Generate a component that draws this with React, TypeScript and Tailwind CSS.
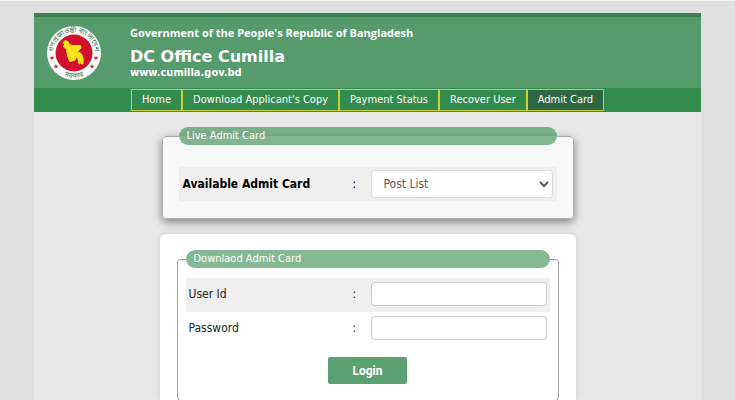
import React from 'react';

const navItems = [
    { label: 'Home', active: false },
    { label: "Download Applicant's Copy", active: false },
    { label: 'Payment Status', active: false },
    { label: 'Recover User', active: false },
    { label: 'Admit Card', active: true },
];

const STAR = 'M0 -2.4 L0.7 -0.8 L2.4 -0.7 L1.1 0.4 L1.5 2 L0 1.1 L-1.5 2 L-1.1 0.4 L-2.4 -0.7 L-0.7 -0.8 Z';

const Seal = () => (
    <svg viewBox="0 0 54 54" className="size-[54px] shrink-0" role="img" aria-label="Government seal">
        <defs>
            <path id="seal-top" d="M7.5 33 A20.5 20.5 0 1 1 46.5 33" />
            <path id="seal-bottom" d="M10 45 A24.5 24.5 0 0 0 44 45" />
        </defs>
        <circle cx="27" cy="27" r="27" fill="#fbfdf8" />
        <circle cx="27" cy="27" r="18.5" fill="#d0102c" />
        <path
            d="M18 14.5 L21 15.5 L22.5 18.5 L25 19.5 L33.5 19.5 L34 22 L31.5 24.5 L29.5 26 L33 26.5 L35 29 L36 33 L36 38 L34.5 38 L33.5 33.5 L33 38 L31.5 37 L31 32 L29 31.5 L28 34 L25.5 35 L22.5 35.5 L21 31 L20 27.5 L19.5 23 L16.5 21 L17.5 18 L16 16.5 Z"
            fill="#fbe21b"
            stroke="#fbe21b"
            strokeLinejoin="round"
        />
        <g fill="#c9283c">
            <path d={STAR} transform="translate(5 32)" />
            <path d={STAR} transform="translate(9 40.5)" />
            <path d={STAR} transform="translate(49 32)" />
            <path d={STAR} transform="translate(45 40.5)" />
        </g>
        <g fill="#3f7553" fontSize="7" fontFamily="'Noto Sans Bengali', 'Noto Sans', sans-serif" textAnchor="middle">
            <text>
                <textPath href="#seal-top" startOffset="50%">গণপ্রজাতন্ত্রী বাংলাদেশ</textPath>
            </text>
            <text>
                <textPath href="#seal-bottom" startOffset="50%">সরকার</textPath>
            </text>
        </g>
    </svg>
);

const Header = () => (
    <header>
        <div className="flex gap-[29px] border-t-4 border-[#38834d] bg-[#559b6b] px-[13px] pt-[9px] pb-2">
            <Seal />
            <div className="font-bold text-white">
                <p className="font-['Open_Sans',sans-serif] text-[11px] leading-[14px]">
                    Government of the People's Republic of Bangladesh
                </p>
                <h1 className="mt-[7px] font-['DejaVu_Sans',sans-serif] text-base leading-5">DC Office Cumilla</h1>
                <p className="text-[11px] leading-3">www.cumilla.gov.bd</p>
            </div>
        </div>
        <nav className="flex justify-center bg-[#338a4d] py-px">
            {navItems.map((item) => (
                <a
                    key={item.label}
                    href="#"
                    className={
                        item.active
                            ? 'border border-[#c8d232] bg-[#2d6640] px-[10px] text-[11px] leading-5 text-white'
                            : 'border border-[#c8d232] px-[10px] text-[11px] leading-5 text-white'
                    }
                >
                    {item.label}
                </a>
            ))}
        </nav>
    </header>
);

const LiveAdmitCard = () => (
    <fieldset className="mx-auto w-full max-w-[412px] rounded border border-[#aaaaaa] bg-[#f8f8f8] px-4 pb-[17px] shadow-[0_3px_8px_rgba(0,0,0,0.45)]">
        <legend className="w-full rounded-full bg-[#338a4d]/60 px-2 text-[11px] leading-[18px] text-white">
            Live Admit Card
        </legend>
        <div className="mt-[22px] flex items-center bg-[#efefef] px-1 py-[3px] text-xs text-black">
            <label htmlFor="post" className="w-[170px] font-bold">
                Available Admit Card
            </label>
            <span className="w-[18px]">:</span>
            <select
                id="post"
                className="h-7 min-w-0 flex-1 rounded-sm border border-[#dcdcdc] bg-white pl-2 text-[#55595c]"
            >
                <option>Post List</option>
            </select>
        </div>
    </fieldset>
);

const fields = [
    { id: 'userId', label: 'User Id', type: 'text' },
    { id: 'password', label: 'Password', type: 'password' },
];

const DownloadAdmitCard = () => (
    <form className="mx-auto mt-[15px] w-full max-w-[416px] rounded-t-md bg-white px-[17px] pt-4 shadow-[0_0_8px_rgba(0,0,0,0.1)]">
        <fieldset className="rounded border border-[#a0a0a0] px-2 pb-4">
            <legend className="w-full rounded-full bg-[#338a4d]/60 px-2 text-[11px] leading-[18px] text-white">
                Downlaod Admit Card
            </legend>
            <div className="mt-[10px]">
                {fields.map((field) => (
                    <div
                        key={field.id}
                        className="flex items-center px-[3px] pt-1 pb-[6px] text-xs text-[#222222] odd:bg-[#efefef]"
                    >
                        <label htmlFor={field.id} className="w-[164px]">
                            {field.label}
                        </label>
                        <span className="w-[18px]">:</span>
                        <input
                            id={field.id}
                            type={field.type}
                            className="h-6 min-w-0 flex-1 rounded-sm border border-[#cccccc] bg-white px-2"
                        />
                    </div>
                ))}
            </div>
            <button
                type="submit"
                className="mx-auto mt-[11px] block h-[27px] rounded-xs bg-[#5ba172] px-6 font-['Roboto',sans-serif] text-xs font-bold text-white"
            >
                Login
            </button>
        </fieldset>
    </form>
);

export default function App() {
    return (
        <div className="min-h-screen border-t border-[#f4f4f4] bg-[#e0e0e0] px-[34px] pt-3 font-['DejaVu_Sans_Condensed','DejaVu_Sans',Verdana,sans-serif]">
            <div className="bg-[#e8e8e8]">
                <Header />
                <main className="px-4 pt-[15px]">
                    <LiveAdmitCard />
                    <DownloadAdmitCard />
                </main>
            </div>
        </div>
    );
}
